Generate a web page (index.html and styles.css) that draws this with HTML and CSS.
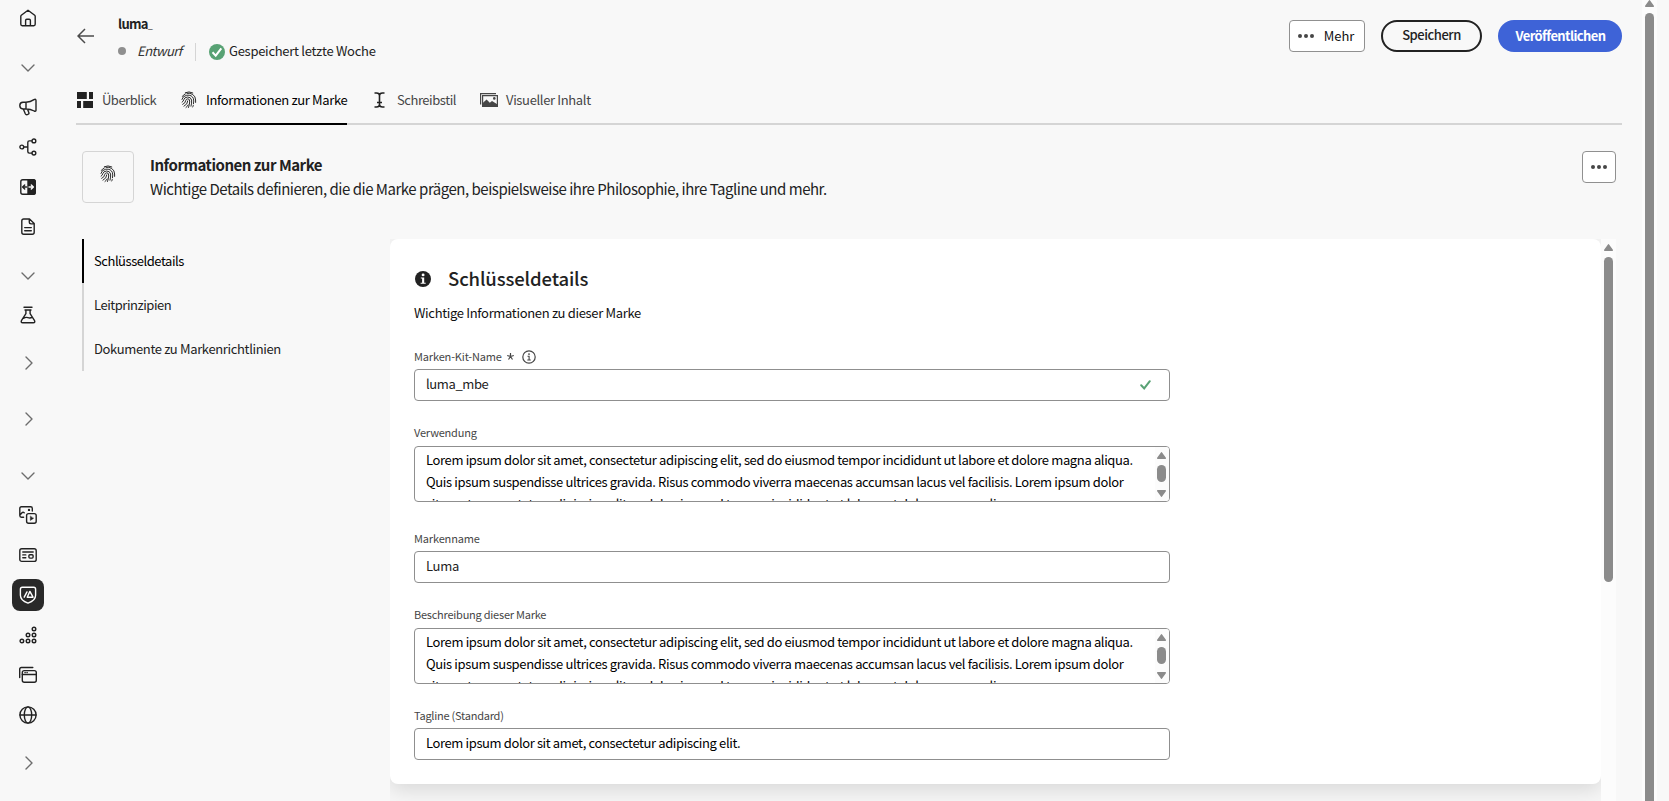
FILE: index.html
```html
<!DOCTYPE html>
<html lang="de">
<head>
<meta charset="utf-8">
<title>Informationen zur Marke</title>
<link rel="stylesheet" href="styles.css">
</head>
<body>
<svg class="defs" width="0" height="0">
  <symbol id="fingerprint" viewBox="0 0 16 18">
    <g fill="none" stroke="currentColor" stroke-width=".95" stroke-linecap="round">
      <path d="M4.300 1.700Q8 -.1 11.800 1.900M1.400 5.400Q2.400 3.600 4.300 2.900M6 2.300Q9 1.700 11.800 3.500Q14.600 5.500 14.600 9v2.400"/>
      <path d="M.9 8.400Q1.600 5 5.800 4.200Q11 3.700 12.400 7.600Q13.100 9.600 12.500 12.800"/>
      <path d="M1.100 11.200Q2.500 10.400 2.800 8.600Q3.400 6.300 6.500 6Q9.900 6 10.600 9Q10.900 12 10 15.200"/>
      <path d="M1.700 13.400Q4.500 12.200 4.800 9.300Q5.200 7.900 6.800 7.800Q8.600 7.900 8.700 10Q8.800 13.300 7.500 16.500"/>
      <path d="M3 15.200Q6.800 13.300 6.800 9.900M5 16.500Q6.400 15.600 7.200 13.900M11.700 16Q12.200 15.200 12.300 14.500"/>
    </g>
  </symbol>
  <symbol id="chevron" viewBox="0 0 14 8"><path d="M1 1l6 6 6-6" fill="none" stroke="#6d6d6d" stroke-width="1.400" stroke-linecap="round" stroke-linejoin="round"/></symbol>
</svg>
<div class="app">
  <nav class="rail">
    <a class="rail-item"><svg width="18" height="18" viewBox="0 0 18 18"><path d="M1.800 7.300v8q0 1.400 1.400 1.400h11.600q1.400 0 1.400-1.400v-8q0-.600-.500-1L9 1.200 2.300 6.300q-.500.400-.500 1zM6.600 16.500v-5q0-1.200 1.200-1.200h2.400q1.200 0 1.200 1.200v5"/></svg></a>
    <a class="rail-toggle gap-9"><svg width="14" height="8"><use href="#chevron"/></svg></a>
    <a class="rail-item"><svg width="18" height="18" viewBox="0 0 18 18"><path d="M7 4.300h-3q-3.200.2-3.200 3.300T4 11h3M7 4.300v6.700M7 4.300q4.500-.300 8-2.700 2-1 2 1v9.600q0 1.500-1.800.800Q11.500 11 7 11M4.300 11l2 4.700q.6 1.300 2 .900l1-.400q1-.500.600-1.500L8.500 11.200"/></svg></a>
    <a class="rail-item"><svg width="18" height="18" viewBox="0 0 18 18"><circle cx="2.800" cy="9" r="1.900"/><circle cx="14.900" cy="2.900" r="1.900"/><circle cx="14.900" cy="15.100" r="1.900"/><path d="M4.800 9h4M12.900 2.900h-2.600q-1.500 0-1.500 1.500v9.200q0 1.500 1.500 1.500h2.600"/></svg></a>
    <a class="rail-item"><svg width="18" height="18" viewBox="0 0 18 18"><rect x="1.800" y="1.800" width="14.400" height="14.400" rx="2"/><path class="solid" d="M9 1.800h5.400q1.800 0 1.800 1.800v10.800q0 1.800-1.800 1.800H9z"/><path d="M7.500 9H4M5.700 6.900L3.600 9l2.100 2.100"/><path class="light" d="M10 9H14M12.300 6.900L14.400 9l-2.100 2.100"/></svg></a>
    <a class="rail-item"><svg width="18" height="18" viewBox="0 0 18 18"><path d="M10.500 1H4.700Q2.800 1 2.800 2.900v11.400q0 1.900 1.900 1.900h8.600q1.900 0 1.900-1.900V5.600zM10.300 1.100v3q0 1.800 1.800 1.800h3M5.700 9.600h6.600M5.700 12.700h6.600"/></svg></a>
    <a class="rail-toggle gap-8"><svg width="14" height="8"><use href="#chevron"/></svg></a>
    <a class="rail-item"><svg width="18" height="18" viewBox="0 0 18 18"><path d="M5 1.200h8M6.900 4v3.700l-4.300 6.600q-1.200 2.300 1.200 2.500h10.400q2.400-.2 1.200-2.500L11.100 7.700V4M6 4h6M4.700 12.300q2-1.500 4.300-.600t4.400-.600"/></svg></a>
    <a class="rail-toggle gap-8 closed"><svg width="14" height="8"><use href="#chevron"/></svg></a>
    <a class="rail-toggle gap-16 closed"><svg width="14" height="8"><use href="#chevron"/></svg></a>
    <a class="rail-toggle gap-16"><svg width="14" height="8"><use href="#chevron"/></svg></a>
    <a class="rail-item"><svg width="18" height="18" viewBox="0 0 18 18"><path d="M13.300 5V2.400q0-1.600-1.600-1.600H2.400Q.800.800.800 2.400v7.200q0 1.600 1.600 1.600h2.200M1 9l2-2.200q1-1 2.200 0"/><circle class="solid" cx="10" cy="3.900" r=".5"/><rect x="7.600" y="7.600" width="9.600" height="9.600" rx="2"/><path class="solid play" d="M11.300 10.300v4.200l3.200-2.100z"/></svg></a>
    <a class="rail-item"><svg width="18" height="18" viewBox="0 0 18 18"><rect x=".8" y="2.800" width="16.400" height="12.600" rx="2"/><path d="M3.800 6h10.400M3.800 8.900h3M3.800 11.800h3"/><rect x="9.900" y="8.800" width="4.200" height="3.300" rx="1"/></svg></a>
    <a class="rail-item selected"><svg width="18" height="18" viewBox="0 0 18 18"><path d="M3.300 1.300h11.400q1.900 0 1.900 1.900v6q0 5.200-7.600 7.900-7.600-2.700-7.600-7.900v-6q0-1.900 1.900-1.900zM5.200 11.200l2.800-5.300M8.200 11.200h5.800L10.900 5.400z"/></svg></a>
    <a class="rail-item"><svg width="18" height="18" viewBox="0 0 18 18"><circle cx="2.900" cy="15" r="1.800"/><circle cx="9" cy="15" r="1.800"/><circle cx="15" cy="15" r="1.800"/><circle cx="9" cy="9" r="1.800"/><circle cx="15" cy="9" r="1.800"/><circle cx="15" cy="3" r="1.800"/></svg></a>
    <a class="rail-item"><svg width="18" height="18" viewBox="0 0 18 18"><path d="M.7 11.500V3.200q0-1.700 1.700-1.700h11.400"/><rect x="3.300" y="4.600" width="14" height="11.600" rx="2"/><path d="M3.300 8.500h14M6 6.500h.2M8 6.500h.2"/></svg></a>
    <a class="rail-item"><svg width="18" height="18" viewBox="0 0 18 18"><circle cx="9" cy="9" r="8.100"/><ellipse cx="9" cy="9" rx="3.700" ry="8.100"/><path d="M1 9h16"/></svg></a>
    <a class="rail-toggle gap-8 closed"><svg width="14" height="8"><use href="#chevron"/></svg></a>
  </nav>

  <main class="main">
    <header class="head">
      <svg class="back" width="18" height="16" viewBox="0 0 18 16"><path d="M8 1L1 8l7 7M1 8h16" fill="none" stroke="#4b4b4b" stroke-width="1.500"/></svg>
      <div class="head-text">
        <div class="name"><b>luma</b><span>_</span></div>
        <div class="status">
          <span class="dot"></span><i class="draft">Entwurf</i><span class="sep"></span>
          <svg width="16" height="16" viewBox="0 0 16 16"><circle cx="8" cy="8" r="8" fill="#58a274"/><path d="M3.500 8.300l3.200 3.300 5.600-7.300" fill="none" stroke="#fff" stroke-width="2"/></svg>
          <span class="saved">Gespeichert letzte Woche</span>
        </div>
      </div>
      <div class="actions">
        <button class="btn more"><span class="dots"><i></i><i></i><i></i></span><span>Mehr</span></button>
        <button class="btn save">Speichern</button>
        <button class="btn publish">Veröffentlichen</button>
      </div>
    </header>

    <div class="tabs">
      <a class="tab overview"><svg width="16" height="16" viewBox="0 0 16 16"><path d="M0 0h9.800v7H0zM12 0h4v7h-4zM0 9h4v7H0zM6.200 9H16v7H6.200z" fill="#222"/></svg><span>Überblick</span></a>
      <a class="tab info active"><svg width="16" height="18"><use href="#fingerprint"/></svg><span>Informationen zur Marke</span></a>
      <a class="tab style"><svg width="11" height="16" viewBox="0 0 11 16"><path d="M.5 1H2.500Q5.500 1 5.500 3.500Q5.500 1 8.500 1H10.500M.5 15H2.500Q5.500 15 5.500 12.500Q5.500 15 8.500 15H10.500M5.500 3v10M3 10.500h5" fill="none" stroke="#222" stroke-width="1.600"/></svg><span>Schreibstil</span></a>
      <a class="tab visual"><svg width="18" height="14" viewBox="0 0 18 14"><path d="M.6 11.500V.6H16M2.600 2.600h14.800v10.800H2.600z" fill="none" stroke="#464646" stroke-width="1.200"/><path d="M3 13.300V9.800L6.600 6.500l3.200 3.300 2.200-1.900 5.300 3.300v2.100z" fill="#464646"/><circle cx="14.300" cy="5.400" r="1.300" fill="#464646"/></svg><span>Visueller Inhalt</span></a>
    </div>

    <section class="intro">
      <div class="intro-icon"><svg width="16" height="18"><use href="#fingerprint"/></svg></div>
      <div class="intro-text">
        <h1>Informationen zur Marke</h1>
        <p>Wichtige Details definieren, die die Marke prägen, beispielsweise ihre Philosophie, ihre Tagline und mehr.</p>
      </div>
      <button class="btn icon-only"><span class="dots"><i></i><i></i><i></i></span></button>
    </section>

    <div class="content">
      <nav class="steps">
        <a class="step current">Schlüsseldetails</a>
        <a class="step">Leitprinzipien</a>
        <a class="step docs">Dokumente zu Markenrichtlinien</a>
      </nav>
      <div class="panel">
        <div class="viewport">
          <div class="card">
            <div class="card-title"><svg width="16" height="16" viewBox="0 0 16 16"><circle cx="8" cy="8" r="8" fill="#222"/><path d="M5.800 6.500h3.400v5.200h1.500v1.100H5.600v-1.100h1.500V7.600H5.800z" fill="#fff"/><circle cx="8.100" cy="3.900" r="1.450" fill="#fff"/></svg><h2>Schlüsseldetails</h2></div>
            <p class="card-note">Wichtige Informationen zu dieser Marke</p>

            <div class="field">
              <div class="label"><span class="kit">Marken-Kit-Name</span>
                <svg class="star" width="7" height="7" viewBox="0 0 7 7"><path d="M3.500 0v3.500M.2 2.500l3.300 1M6.800 2.500l-3.300 1M1.500 6.500l2-3M5.500 6.500l-2-3" fill="none" stroke="#464646" stroke-width="1.200"/></svg>
                <svg class="hint" width="14" height="14" viewBox="0 0 14 14"><circle cx="7" cy="7" r="6.200" fill="none" stroke="#464646" stroke-width="1.200"/><path d="M5.500 6.200h1.600v3.800M5.300 10h3.500" fill="none" stroke="#464646" stroke-width="1.100"/><circle cx="7" cy="4.100" r=".9" fill="#464646"/></svg>
              </div>
              <div class="input valid"><span>luma_mbe</span><svg width="11" height="10" viewBox="0 0 11 10"><path d="M1.200 5.200l3 3.200L9.800 1.200" fill="none" stroke="#58a274" stroke-width="2" stroke-linecap="round"/></svg></div>
            </div>

            <div class="field">
              <div class="label raised"><span class="usage">Verwendung</span></div>
              <div class="textarea">
                <div class="copy">Lorem ipsum dolor sit amet, consectetur adipiscing elit, sed do eiusmod tempor incididunt ut labore et dolore magna aliqua.<br>Quis ipsum suspendisse ultrices gravida. Risus commodo viverra maecenas accumsan lacus vel facilisis. Lorem ipsum dolor<br>sit amet, consectetur adipiscing elit, sed do eiusmod tempor incididunt ut labore et dolore magna aliqua.</div>
                <div class="mini-scroll"><svg width="9" height="7" viewBox="0 0 9 7"><path d="M4.500 .8L8.300 6.200H.7z"/></svg><span></span><svg width="9" height="7" viewBox="0 0 9 7"><path d="M4.500 6.200L8.300 .8H.7z"/></svg></div>
              </div>
            </div>

            <div class="field wide-gap">
              <div class="label"><span>Markenname</span></div>
              <div class="input">Luma</div>
            </div>

            <div class="field">
              <div class="label raised"><span class="desc">Beschreibung dieser Marke</span></div>
              <div class="textarea">
                <div class="copy">Lorem ipsum dolor sit amet, consectetur adipiscing elit, sed do eiusmod tempor incididunt ut labore et dolore magna aliqua.<br>Quis ipsum suspendisse ultrices gravida. Risus commodo viverra maecenas accumsan lacus vel facilisis. Lorem ipsum dolor<br>sit amet, consectetur adipiscing elit, sed do eiusmod tempor incididunt ut labore et dolore magna aliqua.</div>
                <div class="mini-scroll"><svg width="9" height="7" viewBox="0 0 9 7"><path d="M4.500 .8L8.300 6.200H.7z"/></svg><span></span><svg width="9" height="7" viewBox="0 0 9 7"><path d="M4.500 6.200L8.300 .8H.7z"/></svg></div>
              </div>
            </div>

            <div class="field tight-gap">
              <div class="label"><span class="desc">Tagline (Standard)</span></div>
              <div class="input tagline"><span>Lorem ipsum dolor sit amet, consectetur adipiscing elit.</span></div>
            </div>
          </div>
        </div>
        <div class="scroll panel-scroll"><svg width="9" height="7" viewBox="0 0 9 7"><path d="M4.500 .8L8.300 6.200H.7z"/></svg><span></span></div>
      </div>
    </div>
  </main>
  <div class="scroll page-scroll"><svg width="9" height="7" viewBox="0 0 9 7"><path d="M4.500 .8L8.300 6.200H.7z"/></svg><span></span></div>
</div>
</body>
</html>
```
FILE: styles.css
```css
* { box-sizing: border-box; }
body {
  margin: 0;
  background: #f8f8f8;
  color: #222;
  font: 13px/20px "Noto Sans CJK SC", "Noto Sans", sans-serif;
  overflow: hidden;
}
h1, h2, p { margin: 0; }
svg { display: block; flex: none; }
.defs { position: absolute; }
.app { display: flex; height: 801px; }

/* Left icon rail */
.rail { width: 56px; padding-top: 2px; display: flex; flex-direction: column; align-items: center; gap: 8px; flex: none; }
.rail-item, .rail-toggle { width: 32px; height: 32px; flex: none; display: flex; align-items: center; justify-content: center; border-radius: 8px; }
.rail-toggle:not(.closed) svg { margin-top: 1px; }
.rail-item svg { fill: none; stroke: #222; stroke-width: 1.4; stroke-linecap: round; stroke-linejoin: round; }
.rail-item .solid { fill: #222; }
.rail-item .play { stroke-width: .4; }
.rail-item .light { stroke: #f8f8f8; }
.rail-item.selected { background: #292929; }
.rail-item.selected svg { stroke: #fff; }
.closed svg { transform: rotate(-90deg); margin-left: 1px; }
.gap-8 { margin-top: 8px; }
.gap-9 { margin-top: 9px; }
.gap-16 { margin-top: 16px; }

.main { width: 1566px; padding-left: 20px; flex: none; display: flex; flex-direction: column; }

/* Header */
.head { height: 80px; display: flex; }
.back { margin: 28px 0 0 1px; }
.head-text { margin: 14px 0 0 23px; }
.name { height: 20px; letter-spacing: -.7px; }
.name span { font-size: 9px; }
.status { display: flex; align-items: center; height: 20px; margin-top: 7px; }
.dot { width: 8px; height: 8px; border-radius: 50%; background: #8f8f8f; }
.draft { margin-left: 11px; width: 46px; letter-spacing: -.5px; color: #333; white-space: nowrap; }
.sep { width: 1px; height: 18px; background: #d5d5d5; margin: 2px 13px 0 12px; }
.status svg { margin-top: 1px; }
.saved { margin-left: 4px; letter-spacing: -.28px; }
.actions { display: flex; gap: 16px; margin: 20px 0 0 auto; }
.btn { font: inherit; height: 32px; display: flex; align-items: center; justify-content: center; padding: 0; white-space: nowrap; color: #111; }
.more { width: 76px; gap: 10px; border: 1px solid #909090; border-radius: 4px; background: #fff; letter-spacing: -.1px; padding-right: 2px; }
.dots { display: flex; gap: 2px; }
.dots i { width: 4px; height: 4px; border-radius: 50%; background: #464646; }
.save { width: 101px; border: 2px solid #222; border-radius: 16px; background: #f8f8f8; color: #222; font-weight: 500; letter-spacing: -.45px; padding-bottom: 2px; }
.publish { width: 124px; border: 0; border-radius: 16px; background: #3e63d7; color: #fff; font-weight: 700; letter-spacing: -.6px; padding: 0 0 1px 1px; }

/* Tabs */
.tabs { height: 45px; display: flex; border-bottom: 2px solid #d5d5d5; }
.tab { display: flex; align-items: center; height: 45px; padding-bottom: 6px; color: #464646; white-space: nowrap; }
.overview { padding-left: 1px; letter-spacing: -.5px; width: 104px; gap: 9px; padding-bottom: 5px; }
.info { width: 167px; gap: 9px; letter-spacing: -.34px; margin-right: 27px; padding-left: 1px; }
.active { border-bottom: 2px solid #000; color: #000; padding-bottom: 4px; }
.active svg { color: #222; }
.style { width: 106px; gap: 12px; letter-spacing: -.45px; }
.visual { gap: 8px; letter-spacing: -.35px; }

/* Intro */
.intro { height: 114px; padding: 26px 6px 0; display: flex; align-items: flex-start; }
.intro-icon { width: 52px; height: 52px; border: 1px solid #d5d5d5; border-radius: 4px; display: flex; justify-content: center; padding-top: 13px; }
.intro-text { margin-left: 16px; white-space: nowrap; }
h1 { font-size: 15px; line-height: 24px; font-weight: 700; letter-spacing: -.48px; padding-top: 2px; }
.intro-text p { font-size: 15px; line-height: 24px; letter-spacing: -.483px; }
.icon-only { width: 34px; margin-left: auto; border: 1px solid #909090; border-radius: 4px; background: #fff; }

/* Content */
.content { display: flex; height: 562px; padding: 0 6px; }
.steps { width: 308px; flex: none; }
.step { display: flex; align-items: center; height: 44px; padding-left: 10px; border-left: 2px solid #d5d5d5; letter-spacing: -.46px; }
.step.current { border-color: #000; color: #000; }
.step.docs { letter-spacing: -.35px; }
.panel { flex: 1; display: flex; }
.viewport { width: 1211px; overflow: hidden; background: #f6f6f6; }
.card { height: 545px; padding: 26px 24px 0; border-radius: 8px; background: #fff; box-shadow: 0 6px 20px rgba(0, 0, 0, .12); }
.card-title { display: flex; align-items: center; gap: 17px; height: 28px; padding-left: 1px; }
h2 { font-size: 18.5px; line-height: 26px; font-weight: 500; letter-spacing: -.12px; margin-top: -3px; }
.card-note { line-height: 22px; margin-top: 9px; letter-spacing: -.33px; color: #111; }
.field { width: 756px; margin-top: 19px; }
.wide-gap { margin-top: 23px; }
.tight-gap { margin-top: 18px; }
.label { height: 26px; display: flex; align-items: center; font-size: 11px; color: #464646; letter-spacing: -.15px; }
.label span { padding-bottom: 1px; }
.label.raised span { padding-bottom: 3px; }
.label .desc { letter-spacing: -.24px; }
.label .usage { letter-spacing: -.2px; }
.star { margin: 1px 8px 0 5px; }
.hint { margin-top: 1px; }
.input { height: 32px; border: 1px solid #8f8f8f; border-radius: 4px; background: #fff; padding: 0 18px 3px 11px; display: flex; align-items: center; justify-content: space-between; letter-spacing: -.3px; }
.valid { letter-spacing: -.38px; }
.valid svg { margin-top: 2px; }
.tagline { color: #000; letter-spacing: -.385px; }
.textarea { height: 56px; border: 1px solid #8f8f8f; border-radius: 4px; background: #fff; padding-left: 11px; overflow: hidden; display: flex; justify-content: space-between; }
.copy { padding-top: 2px; line-height: 22px; letter-spacing: -.365px; white-space: nowrap; color: #000; }
.mini-scroll { width: 15px; background: #fcfcfc; display: flex; flex-direction: column; align-items: center; padding: 5px 2px 0 0; margin-right: -1px; gap: 6px; }
.mini-scroll span { width: 9px; height: 17px; border-radius: 5px; background: #8b8b8b; }
.mini-scroll span + svg { margin-top: 2px; }
.mini-scroll svg, .scroll svg { fill: #8b8b8b; stroke: #8b8b8b; stroke-width: 1.4; stroke-linejoin: round; }

/* Scrollbars */
.scroll { width: 15px; background: #fcfcfc; display: flex; flex-direction: column; align-items: center; gap: 6px; flex: none; }
.scroll span { width: 9px; background: #8b8b8b; border-radius: 5px; }
.panel-scroll { padding-top: 5px; }
.panel-scroll span { height: 325px; }
.page-scroll { margin-left: 20px; }
.page-scroll span { flex: 1; border-radius: 5px 5px 0 0; }
```
